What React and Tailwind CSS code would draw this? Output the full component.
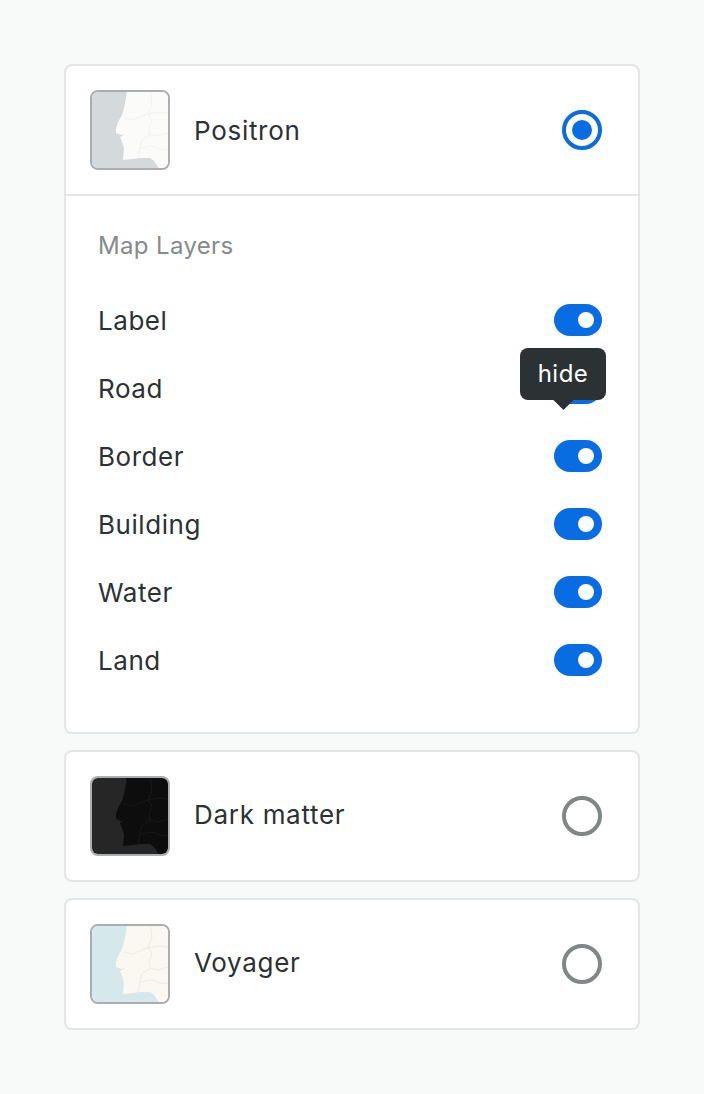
const COAST =
  "M37 -2 L36 8 L34 18 L32 25 L28 32 L26 38 L26 43 L31 45 L35 44 L30 47 L32 52 L34 58 L33 70 L42 69 L50 68 L60 68 L64 71 L68 77 L72 82 L82 82 L82 -2 Z";

const BORDERS = [
  "M60 -2 L62 14 L58 24 L62 30 L59 38 L60 44 L52 50 L50 58 L48 69",
  "M34 28 L42 30 L52 26 L58 24 L70 22 L82 24",
  "M60 44 L68 46 L82 42",
  "M50 58 L62 56 L72 60 L82 58",
];

const THEMES = {
  positron: { sea: "#d4dadc", land: "#fbfbfa", line: "#f3ecea", blur: "blur-positron" },
  dark: { sea: "#262626", land: "#0d0d0d", line: "#1c1c1c", blur: "blur-dark" },
  voyager: { sea: "#d5e8eb", land: "#fbf8f1", line: "#eee5dd", blur: "blur-voyager" },
};

function MapThumb({ theme }) {
  const c = THEMES[theme];
  return (
    <div className="h-20 w-20 shrink-0 overflow-hidden rounded-lg border-2 border-[#aaaeb0]">
      <svg viewBox="2 2 76 76" className="block h-full w-full">
        <defs>
          <filter id={c.blur} x="-10%" y="-10%" width="120%" height="120%">
            <feGaussianBlur stdDeviation="0.6" />
          </filter>
        </defs>
        <g filter={`url(#${c.blur})`}>
          <rect x="-4" y="-4" width="90" height="90" fill={c.sea} />
          <path d={COAST} fill={c.land} />
          {BORDERS.map((d) => (
            <path key={d} d={d} fill="none" stroke={c.line} strokeWidth="0.8" />
          ))}
        </g>
      </svg>
    </div>
  );
}

function Radio({ checked }) {
  if (checked) {
    return (
      <div className="flex h-10 w-10 items-center justify-center rounded-full border-4 border-[#086de3]">
        <div className="h-5 w-5 rounded-full bg-[#086de3]"></div>
      </div>
    );
  }
  return <div className="h-10 w-10 rounded-full border-4 border-[#828687]"></div>;
}

function Toggle() {
  return (
    <div className="flex h-8 w-12 items-center justify-end rounded-full bg-[#086de3] pr-2">
      <div className="h-4 w-4 rounded-full bg-white"></div>
    </div>
  );
}

function StyleHeader({ theme, name, checked, className }) {
  return (
    <div className="flex items-center justify-between p-6">
      <div className="flex items-center gap-6">
        <MapThumb theme={theme} />
        <span className={`text-[26px] leading-8 tracking-[0.7px] text-[#2c3133] ${className}`}>{name}</span>
      </div>
      <div className="pr-3">
        <Radio checked={checked} />
      </div>
    </div>
  );
}

function LayerRow({ name, tooltip }) {
  return (
    <div className="flex h-[68px] items-center justify-between">
      <span className="translate-y-px text-[26px] leading-8 tracking-[0.55px] text-[#2c3133]">{name}</span>
      <div className="relative">
        <Toggle />
        {tooltip && (
          <div className="absolute bottom-[4px] right-[-4px] flex h-[52px] w-[86px] items-center justify-center rounded-lg bg-[#2c3133] text-2xl tracking-[0.5px] text-white">
            {tooltip}
            <div className="absolute bottom-[-7px] left-[36px] h-[15px] w-[15px] rotate-45 bg-[#2c3133]"></div>
          </div>
        )}
      </div>
    </div>
  );
}

const LAYERS = ["Label", "Road", "Border", "Building", "Water", "Land"];

export default function App() {
  return (
    <div className="flex min-h-[1094px] flex-col gap-4 bg-[#f8f9f9] px-16 pt-16 font-['Inter',sans-serif]">
      <div className="rounded-lg border-2 border-[#e3e5e6] bg-white">
        <StyleHeader theme="positron" name="Positron" checked className="translate-y-px" />
        <div className="border-t-2 border-[#e3e5e6] pb-[38px] pl-8 pr-9 pt-[34px]">
          <p className="mb-[24px] text-2xl leading-8 tracking-[0.35px] text-[#858a8c]">Map Layers</p>
          {LAYERS.map((name) => (
            <LayerRow key={name} name={name} tooltip={name === "Road" ? "hide" : null} />
          ))}
        </div>
      </div>
      <div className="rounded-lg border-2 border-[#e3e5e6] bg-white">
        <StyleHeader theme="dark" name="Dark matter" className="-translate-y-px" />
      </div>
      <div className="rounded-lg border-2 border-[#e3e5e6] bg-white">
        <StyleHeader theme="voyager" name="Voyager" className="-translate-y-px" />
      </div>
    </div>
  );
}
